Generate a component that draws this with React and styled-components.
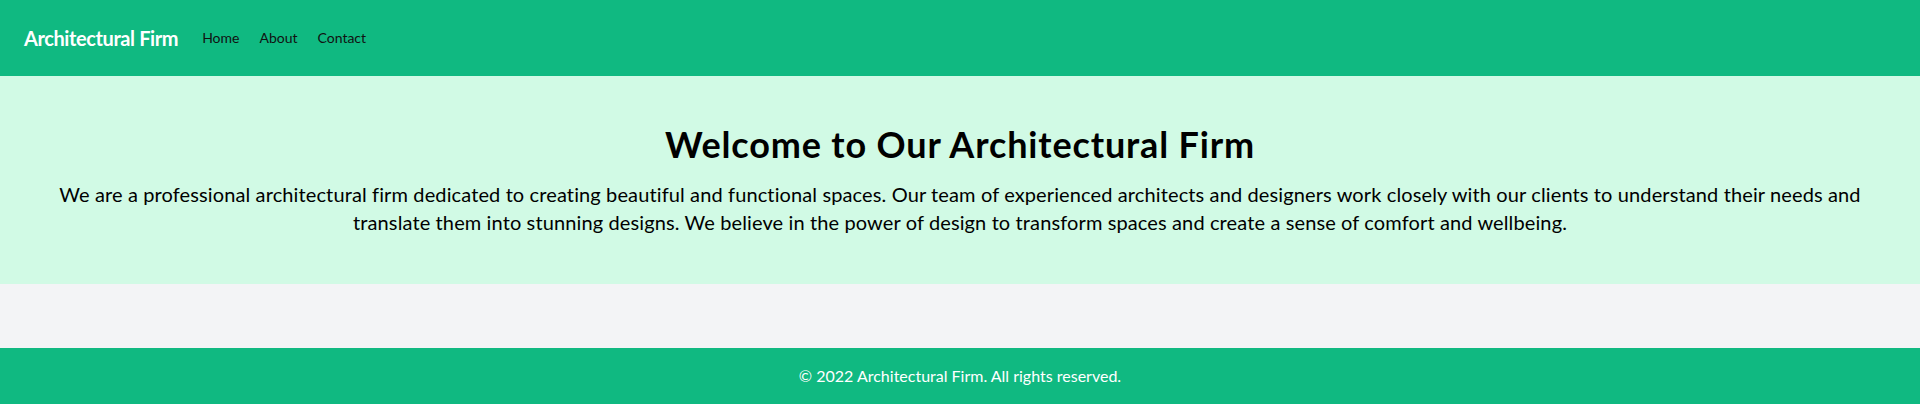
import React from 'react';
import styled, { createGlobalStyle } from 'styled-components';

const GlobalStyle = createGlobalStyle`
  * { box-sizing: border-box; }
  body {
    margin: 0;
    font-family: Lato, "Open Sans", sans-serif;
    background: #f3f4f6;
    color: #000;
  }
`;

const App = () => {
  return (
    <>
      <GlobalStyle />
      <Page>
        <Header>
          <Logo>Architectural Firm</Logo>
          <Nav>
            <NavLink href="#">Home</NavLink>
            <NavLink href="#">About</NavLink>
            <NavLink href="#">Contact</NavLink>
          </Nav>
        </Header>
        <Hero>
          <Title>Welcome to Our Architectural Firm</Title>
          <Intro>
            We are a professional architectural firm dedicated to creating beautiful and functional spaces.
            Our team of experienced architects and designers work closely with our clients to understand
            their needs and translate them into stunning designs. We believe in the power of design to
            transform spaces and create a sense of comfort and wellbeing.
          </Intro>
        </Hero>
        <Main />
        <Footer>© 2022 Architectural Firm. All rights reserved.</Footer>
      </Page>
    </>
  );
};

export default App;

const Page = styled.div`
  display: flex;
  flex-direction: column;
  min-height: 404px;
`;

const Header = styled.header`
  display: flex;
  align-items: center;
  padding: 24px;
  background: #10b981;
`;

const Logo = styled.h1`
  margin: 0;
  font-size: 20px;
  line-height: 28px;
  font-weight: 700;
  letter-spacing: -0.4px;
  color: #fff;
`;

const Nav = styled.nav`
  display: flex;
  gap: 20px;
  margin-left: 24px;
`;

const NavLink = styled.a`
  font-size: 14px;
  line-height: 20px;
  color: #111;
  text-decoration: none;
`;

const Hero = styled.section`
  padding: 48px;
  background: #d1fae5;
  text-align: center;
`;

const Title = styled.h2`
  margin: 0 0 16px;
  font-size: 36px;
  line-height: 40px;
  font-weight: 700;
  letter-spacing: 0.85px;
`;

const Intro = styled.p`
  margin: 0;
  font-size: 20px;
  line-height: 28px;
  letter-spacing: 0.12px;
`;

const Main = styled.main`
  flex: 1;
  min-height: 64px;
`;

const Footer = styled.footer`
  padding: 16px;
  background: #10b981;
  color: #fff;
  text-align: center;
  font-size: 16px;
  line-height: 24px;
`;
